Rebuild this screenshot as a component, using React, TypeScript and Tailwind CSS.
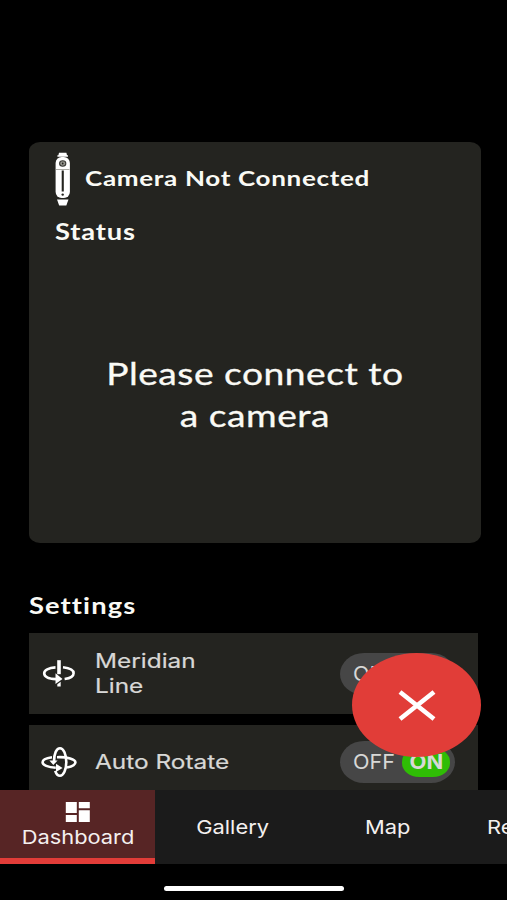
import type { ReactNode } from 'react'

function CameraIcon() {
  return (
    <svg width="16" height="54" viewBox="0 0 16 54" className="shrink-0">
      <path d="M4 0.8h7.4l.6 2.400h1v1.600H2.400V3.200h1z" fill="#fff" />
      <rect x="0.600" y="5" width="14.300" height="41" rx="6" fill="#fff" />
      <path d="M1 17.5h13.5" stroke="#96968f" strokeWidth="0.8" />
      <ellipse cx="7.7" cy="11.5" rx="3.100" ry="2.7" fill="#96968f" stroke="#3a3a36" strokeWidth="1.1" />
      <circle cx="7.7" cy="11.5" r="0.9" fill="#24241f" />
      <rect x="6.7" y="18.5" width="2.1" height="21" fill="#24241f" />
      <circle cx="7.7" cy="42.6" r="1.2" fill="#24241f" />
      <path d="M2 47.500h11.500l-2.200 6H4.200z" fill="#fff" />
    </svg>
  )
}

function MeridianIcon() {
  return (
    <svg width="36" height="32" viewBox="0 0 36 32" fill="none" stroke="#fff" strokeWidth="2.6">
      <path d="M14.5 9.4C7.500 9.700 3.2 12.2 3.2 15.2c0 3.4 5 5.6 11.8 5.9M22 9.3c6.4.7 10.6 2.9 10.6 5.9 0 3-3.8 5.1-9 5.8" />
      <path d="M18 2.2v14" strokeWidth="3.6" />
      <path d="M14.5 15.3l7 5.6-7 5z" fill="#fff" stroke="none" />
      <path d="M16.3 26.2l3.4-2.4v4.8h-3.4z" fill="#fff" stroke="none" />
    </svg>
  )
}

function RotateIcon() {
  return (
    <svg width="38" height="32" viewBox="0 0 38 32" fill="none" stroke="#fff" strokeWidth="2.6">
      <path d="M12 11.2C6 12 2.600 13.800 2.600 16.300c0 2.700 5.200 5.100 13.200 5.500" />
      <path d="M17 11.200c10.500-.5 18.400 2 18.400 5.100 0 2.300-3.400 4.300-8.400 5.200" />
      <path d="M14 15.500C14 7.500 16.500 2.200 20 2.200c3.500 0 6.300 6 6.300 13.800S23.500 29.800 20 29.800c-2 0-3.800-1.900-4.800-5" />
      <path d="M9.400 14.500h8.200l-4.300 4.600z" fill="#fff" stroke="none" />
      <path d="M16 17.800l6.600 4.100-6.600 4.100z" fill="#fff" stroke="none" />
    </svg>
  )
}

function DashboardIcon() {
  return (
    <svg width="26" height="22" viewBox="0 0 26 22" fill="#fff">
      <path d="M.8 1h11v11h-11zM13.800 1h11v6.300h-11zM.8 14h11v7h-11zM13.800 9.300h11V21h-11z" />
    </svg>
  )
}

function Toggle({ on = false }: { on?: boolean }) {
  return (
    <div className="flex h-[42px] w-[115px] shrink-0 items-center rounded-[24px/21px] bg-[#464646] pr-[5px] pl-[13px] text-[20px] text-[#d8d8d6]">
      <span className="w-[49px]">
        <span className="inline-block origin-left scale-x-[1.08]">OFF</span>
      </span>
      <span
        className={`flex h-[29px] w-[48px] items-center justify-center rounded-[17px/14px] ${
          on ? 'bg-[#2fbd05] font-bold' : ''
        }`}
      >
        <span className="inline-block scale-x-[1.1]">ON</span>
      </span>
    </div>
  )
}

function SettingRow({ icon, label, on }: { icon: ReactNode; label: ReactNode; on?: boolean }) {
  return (
    <div className="flex w-[449px] items-center bg-[#242420] pr-[23px]">
      <div className="flex w-[59px] shrink-0 justify-center">{icon}</div>
      <div className="min-w-0 flex-1 pl-[7px] text-[20px] leading-[25px] text-[#d8d8d6]">
        <span className="inline-block origin-left scale-x-[1.22] whitespace-nowrap [-webkit-text-stroke:0.2px]">
          {label}
        </span>
      </div>
      <Toggle on={on} />
    </div>
  )
}

export default function App() {
  return (
    <div className="relative flex h-screen w-full flex-col overflow-hidden bg-black font-['Inter',sans-serif]">
      <main className="flex min-h-0 flex-1 flex-col overflow-hidden pt-[142px] pl-[29px]">
        {/* Camera status */}
        <section className="flex h-[401px] w-[452px] shrink-0 flex-col rounded-[11px/9px] bg-[#242420] px-[26px] pt-[10px] font-['Lato',sans-serif] text-[#fafaf5]">
          <div className="flex h-[54px] items-center">
            <CameraIcon />
            <h1 className="mt-[-2px] ml-[14px] origin-left scale-x-[1.24] text-[21px] font-bold tracking-[0.54px] whitespace-nowrap">
              Camera Not Connected
            </h1>
          </div>
          <h2 className="mt-[9px] origin-left scale-x-[1.24] text-[22px] leading-[34px] font-bold tracking-[0.7px]">
            Status
          </h2>
          <p className="mt-[103px] text-center text-[30px] leading-[42px]">
            <span className="inline-block scale-x-[1.24] tracking-[0.4px] whitespace-nowrap [-webkit-text-stroke:0.3px]">
              Please connect to
              <br />a camera
            </span>
          </p>
        </section>

        {/* Settings */}
        <h2 className="mt-[46px] mb-[10px] shrink-0 origin-left scale-x-[1.24] font-['Lato',sans-serif] text-[22px] leading-[34px] font-bold tracking-[0.9px] text-[#fafaf5]">
          Settings
        </h2>
        <div className="grid shrink-0 grid-rows-[81px_74px] gap-[11px]">
          <SettingRow
            icon={<MeridianIcon />}
            label={
              <>
                Meridian
                <br />
                Line
              </>
            }
          />
          <SettingRow icon={<RotateIcon />} label="Auto Rotate" on />
        </div>
      </main>

      {/* Tabs */}
      <nav className="flex h-[74px] shrink-0 overflow-hidden bg-[#1b1b1b] text-[19px] text-[#f4f0ef]">
        <div className="flex w-[155px] shrink-0 flex-col items-center border-b-[6px] border-[#e23c38] bg-[#572525] pt-[11px] leading-[24px]">
          <DashboardIcon />
          <span className="mt-[3px] scale-x-[1.15]">Dashboard</span>
        </div>
        <div className="flex w-[155px] shrink-0 items-center justify-center pt-[2px]">
          <span className="scale-x-[1.15]">Gallery</span>
        </div>
        <div className="flex w-[155px] shrink-0 items-center justify-center pt-[2px]">
          <span className="scale-x-[1.15]">Map</span>
        </div>
        <div className="flex shrink-0 items-center pt-[2px] pl-[22px]">
          <span className="origin-left scale-x-[1.15]">Re</span>
        </div>
      </nav>
      <div className="flex h-[36px] shrink-0 justify-center pt-[22px]">
        <div className="h-[5px] w-[180px] rounded-full bg-white" />
      </div>

      {/* Floating close button */}
      <button className="absolute top-[653px] left-[352px] flex h-[104px] w-[129px] items-center justify-center rounded-[50%] bg-[#e13d38]">
        <svg width="38" height="32" viewBox="0 0 38 32" stroke="#fff" strokeWidth="4.6">
          <path d="M2 3l34 27M36 3l-34 27" />
        </svg>
      </button>
    </div>
  )
}
